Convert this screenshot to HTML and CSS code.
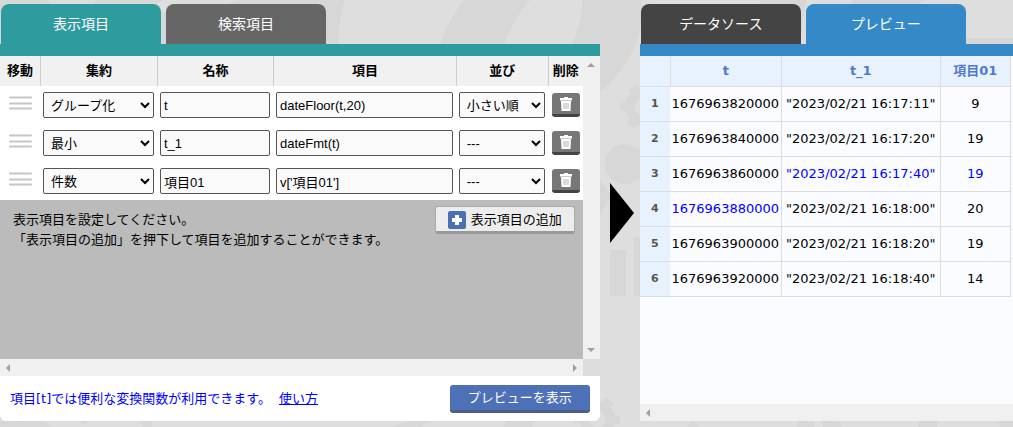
FILE: index.html
```html
<!DOCTYPE html>
<html lang="ja">
<head>
<meta charset="utf-8">
<title>プレビュー</title>
<link rel="stylesheet" href="styles.css">
</head>
<body>
<svg class="backdrop" viewBox="0 0 1013 427" preserveAspectRatio="xMinYMin slice" aria-hidden="true">
  <defs>
    <g id="gear">
      <circle r="13" fill="none" stroke="#d7d7d7" stroke-width="10"/>
      <circle r="19" fill="none" stroke="#d7d7d7" stroke-width="8" stroke-dasharray="9 10.9" stroke-dashoffset="4"/>
    </g>
  </defs>
  <rect width="1013" height="427" fill="#dedede"/>
  <path d="M0 0H345Q338 22 339 44V66H0Z" fill="#d7d7d7"/>
  <ellipse cx="72" cy="-8" rx="28" ry="18" fill="#dedede"/>
  <path d="M120 12Q146 10 164 0H240Q214 8 198 12Z" fill="#dedede"/>
  <path d="M464 0H530Q513 20 504 44H440Q448 20 464 0Z" fill="#d7d7d7"/>
  <path d="M582 0H641V27C636 52 620 76 598 94V44H572Q583 20 582 0Z" fill="#d7d7d7"/>
  <use href="#gear" x="643" y="107"/>
  <circle cx="625" cy="164" r="20" fill="#d7d7d7"/>
  <path d="M600 181L612 195L600 214Z" fill="#d7d7d7"/>
  <path d="M610 250H626V296H610ZM634 237H650V296H634Z" fill="#d7d7d7"/>
  <use href="#gear" x="597" y="419"/>
  <use href="#gear" x="518" y="437"/>
  <path d="M0 421H44L52 427H0ZM78 421H90L84 424ZM140 421H152V427H143ZM390 427L410 421H430L421 427ZM690 421H695L699 427H687ZM800 421H814V427H796ZM823 421H838L842 427H823ZM918 421H937V427H918ZM996 421H1013V427H1000Z" fill="#d7d7d7"/>
  <path d="M806 0L800 44H760V0ZM853 0H925L920 4H850ZM966 38H1013V44H966Z" fill="#d7d7d7"/>
</svg>

<svg class="sprite" aria-hidden="true">
  <symbol id="trash" viewBox="0 0 12 14">
    <path d="M4 0h4v1h4v3H11L10.500 14H1.500L1 4H0V1h4z" fill="#fff"/>
    <path d="M0 3.500H12" stroke="#c8c8c8" stroke-width="1"/>
    <path d="M4 6v6M6 6v6M8 6v6" stroke="#b4b4b4" stroke-width="1"/>
  </symbol>
  <symbol id="grip" viewBox="0 0 23 14">
    <path d="M1 1.500H22M1 7.500H22M1 12.500H22" stroke="#c6c6c6" stroke-width="2" stroke-linecap="round"/>
  </symbol>
  <symbol id="arrow" viewBox="0 0 8 8"><path d="M0 6L4 2L8 6Z" fill="#a0a0a0"/></symbol>
</svg>

<main class="workspace">
  <section class="panel">
    <nav class="tabs">
      <button class="tab tab-teal" type="button">表示項目</button>
      <button class="tab tab-gray" type="button">検索項目</button>
    </nav>
    <div class="bar bar-teal"></div>
    <div class="scroll-frame">
      <div class="scroll-body">
        <table class="fields">
          <colgroup><col class="c-move"><col class="c-agg"><col class="c-name"><col><col class="c-sort"><col class="c-del"></colgroup>
          <thead>
            <tr><th>移動</th><th>集約</th><th>名称</th><th>項目</th><th>並び</th><th>削除</th></tr>
          </thead>
          <tbody>
            <tr>
              <td class="move"><svg class="grip"><use href="#grip"/></svg></td>
              <td><select class="control" aria-label="集約"><option>グループ化</option></select></td>
              <td><input class="control" type="text" aria-label="名称" value="t"></td>
              <td><input class="control" type="text" aria-label="項目" value="dateFloor(t,20)"></td>
              <td><select class="control" aria-label="並び"><option>小さい順</option></select></td>
              <td class="del"><button class="delete" type="button" aria-label="削除"><svg class="trash"><use href="#trash"/></svg></button></td>
            </tr>
            <tr>
              <td class="move"><svg class="grip"><use href="#grip"/></svg></td>
              <td><select class="control" aria-label="集約"><option>最小</option></select></td>
              <td><input class="control" type="text" aria-label="名称" value="t_1"></td>
              <td><input class="control" type="text" aria-label="項目" value="dateFmt(t)"></td>
              <td><select class="control" aria-label="並び"><option>---</option></select></td>
              <td class="del"><button class="delete" type="button" aria-label="削除"><svg class="trash"><use href="#trash"/></svg></button></td>
            </tr>
            <tr>
              <td class="move"><svg class="grip"><use href="#grip"/></svg></td>
              <td><select class="control" aria-label="集約"><option>件数</option></select></td>
              <td><input class="control" type="text" aria-label="名称" value="項目01"></td>
              <td><input class="control" type="text" aria-label="項目" value="v['項目01']"></td>
              <td><select class="control" aria-label="並び"><option>---</option></select></td>
              <td class="del"><button class="delete" type="button" aria-label="削除"><svg class="trash"><use href="#trash"/></svg></button></td>
            </tr>
          </tbody>
        </table>
        <div class="hint">
          <p class="hint-text">表示項目を設定してください。<br>「表示項目の追加」を押下して項目を追加することができます。</p>
          <button class="add" type="button">
            <svg class="plus" viewBox="0 0 18 18"><rect width="18" height="18" rx="2" fill="#4c6fb5"/><path d="M9 4V14M4 9H14" stroke="#fff" stroke-width="4"/></svg>
            表示項目の追加
          </button>
        </div>
      </div>
      <div class="track track-v"><svg class="arrow"><use href="#arrow"/></svg><svg class="arrow down"><use href="#arrow"/></svg></div>
      <div class="track track-h"><svg class="arrow left"><use href="#arrow"/></svg><svg class="arrow right"><use href="#arrow"/></svg></div>
      <div class="corner"></div>
    </div>
    <footer class="footer">
      <p class="note">項目[t]では便利な変換関数が利用できます。<a href="#">使い方</a></p>
      <button class="preview" type="button">プレビューを表示</button>
    </footer>
  </section>

  <svg class="pointer" viewBox="0 0 24 60" aria-hidden="true"><path d="M0 0L24 30L0 60Z"/></svg>

  <section class="panel">
    <nav class="tabs">
      <button class="tab tab-dark" type="button">データソース</button>
      <button class="tab tab-blue" type="button">プレビュー</button>
    </nav>
    <div class="bar bar-blue"></div>
    <div class="result">
      <table class="data">
        <colgroup><col class="d-index"><col class="d-time"><col class="d-format"><col class="d-count"></colgroup>
        <thead><tr><td></td><th>t</th><th>t_1</th><th>項目01</th></tr></thead>
        <tbody>
          <tr><th>1</th><td>1676963820000</td><td>"2023/02/21 16:17:11"</td><td>9</td></tr>
          <tr><th>2</th><td>1676963840000</td><td>"2023/02/21 16:17:20"</td><td>19</td></tr>
          <tr><th>3</th><td>1676963860000</td><td class="marked">"2023/02/21 16:17:40"</td><td class="marked">19</td></tr>
          <tr><th>4</th><td class="marked">1676963880000</td><td>"2023/02/21 16:18:00"</td><td>20</td></tr>
          <tr><th>5</th><td>1676963900000</td><td>"2023/02/21 16:18:20"</td><td>19</td></tr>
          <tr><th>6</th><td>1676963920000</td><td>"2023/02/21 16:18:40"</td><td>14</td></tr>
        </tbody>
      </table>
    </div>
    <div class="track track-h"><svg class="arrow left"><use href="#arrow"/></svg></div>
  </section>
</main>
</body>
</html>
```
FILE: styles.css
```css
* { box-sizing: border-box; }

body {
  margin: 0;
  font: 13px/20px "Liberation Sans", "Noto Sans CJK JP", sans-serif;
  color: #000;
  background: #dedede;
}

p { margin: 0; }

button { font: inherit; padding: 0; cursor: pointer; }

.backdrop { position: absolute; inset: 0; width: 100%; height: 100%; z-index: -1; }
.sprite { display: none; }

.workspace {
  display: grid;
  grid-template-columns: minmax(0, 45fr) 40px minmax(0, 28fr);
  min-height: 100vh;
  padding: 4px 0 6px;
}

.panel { display: flex; flex-direction: column; min-width: 0; }

.tabs { display: flex; gap: 5px; padding-left: 1px; }
.tab {
  width: 160px;
  height: 40px;
  border: 0;
  border-radius: 8px 8px 0 0;
  color: #fff;
  font-size: 14px;
}
.tab-teal, .bar-teal { background: #2e9b9f; }
.tab-gray { background: #666; }
.tab-dark { background: #444; }
.tab-blue, .bar-blue { background: #3589c6; }
.bar { height: 12px; }

.scroll-frame {
  flex: 1;
  display: grid;
  grid-template: 1fr 17px / minmax(0, 1fr) 17px;
}
.scroll-body { background: #bbb; }

.track { display: flex; background: #f0f0f0; }
.track-v { flex-direction: column; justify-content: space-between; align-items: center; padding: 5px 0; }
.track-h { height: 17px; justify-content: space-between; align-items: center; padding: 0 4px; }
.corner { background: #dcdcdc; }
.arrow { width: 8px; height: 8px; }
.down { transform: rotate(180deg); }
.left { transform: rotate(-90deg); }
.right { transform: rotate(90deg); }

.fields { width: 100%; table-layout: fixed; border-collapse: separate; border-spacing: 0; background: #fff; }
.c-move { width: 41px; }
.c-agg { width: 117px; }
.c-name { width: 116px; }
.c-sort { width: 92px; }
.c-del { width: 34px; }
.fields th { height: 30px; padding: 0; background: #f1f1f1; border-right: 1px solid #ccc; }
.fields th:last-child { border-right: 0; }
.fields td { height: 38px; padding: 0 4px 0 2px; }
.fields .move, .fields .del { padding: 0; text-align: center; }

.control {
  display: block;
  width: 100%;
  height: 26px;
  padding: 0 3px;
  border: 1px solid #555;
  border-radius: 2px;
  background-color: #fafafa;
  color: #000;
  font: inherit;
}

.grip { display: block; width: 23px; height: 14px; margin: 0 auto 4px; }

.delete {
  display: block;
  width: 28px;
  height: 24px;
  margin: 0 auto;
  border: 0;
  border-bottom: 3px solid #444;
  border-radius: 3px;
  background: #777;
}
.trash { display: block; width: 12px; height: 14px; margin: 0 auto; }

.hint { display: flex; justify-content: space-between; padding: 6px 8px 0 13px; }
.hint-text { padding-top: 4px; white-space: nowrap; }
.add {
  display: flex;
  flex: none;
  align-items: center;
  justify-content: center;
  gap: 5px;
  width: 140px;
  height: 28px;
  padding-top: 2px;
  border: 1px solid #aaa;
  border-bottom: 3px solid #999;
  border-radius: 3px;
  background: #ededed;
  color: #000;
}
.plus { width: 18px; height: 18px; }

.footer {
  display: flex;
  align-items: center;
  justify-content: space-between;
  height: 45px;
  padding: 0 10px;
  background: #fff;
  border-radius: 0 0 6px 6px;
}
.note {
  color: #00f;
  font-family: "DejaVu Sans", "Noto Sans CJK JP", sans-serif;
  white-space: nowrap;
}
.note a { margin-left: 8px; color: #00f; }
.preview {
  width: 140px;
  height: 28px;
  padding-top: 2px;
  border: 0;
  border-bottom: 3px solid #4b5f87;
  border-radius: 3px;
  background: #4d70b6;
  color: #fff;
}

.pointer { align-self: start; width: 24px; height: 60px; margin: 179px 0 0 10px; }

.result { flex: 1; overflow: hidden; background: #fbfcff; }
.data {
  width: 371px;
  table-layout: fixed;
  border-collapse: separate;
  border-spacing: 0;
  font-family: "DejaVu Sans", "Noto Sans CJK JP", sans-serif;
  text-align: center;
}
.d-index { width: 30px; }
.d-time { width: 112px; }
.d-format { width: 159px; }
.d-count { width: 70px; }
.data td, .data th {
  height: 35px;
  padding: 0;
  border: 0 solid #ddd;
  border-width: 0 1px 1px 0;
  white-space: nowrap;
}
.data thead td, .data thead th { height: 31px; background: #e8f2ff; color: #5079cc; }
.data thead td { border-right: 0; }
.data thead td + th { border-left: 1px solid #ddd; }
.data tbody th { border-right: 0; background: #e8f2ff; color: #555; font-size: 11px; }
.data .marked { color: #00f; }
```
